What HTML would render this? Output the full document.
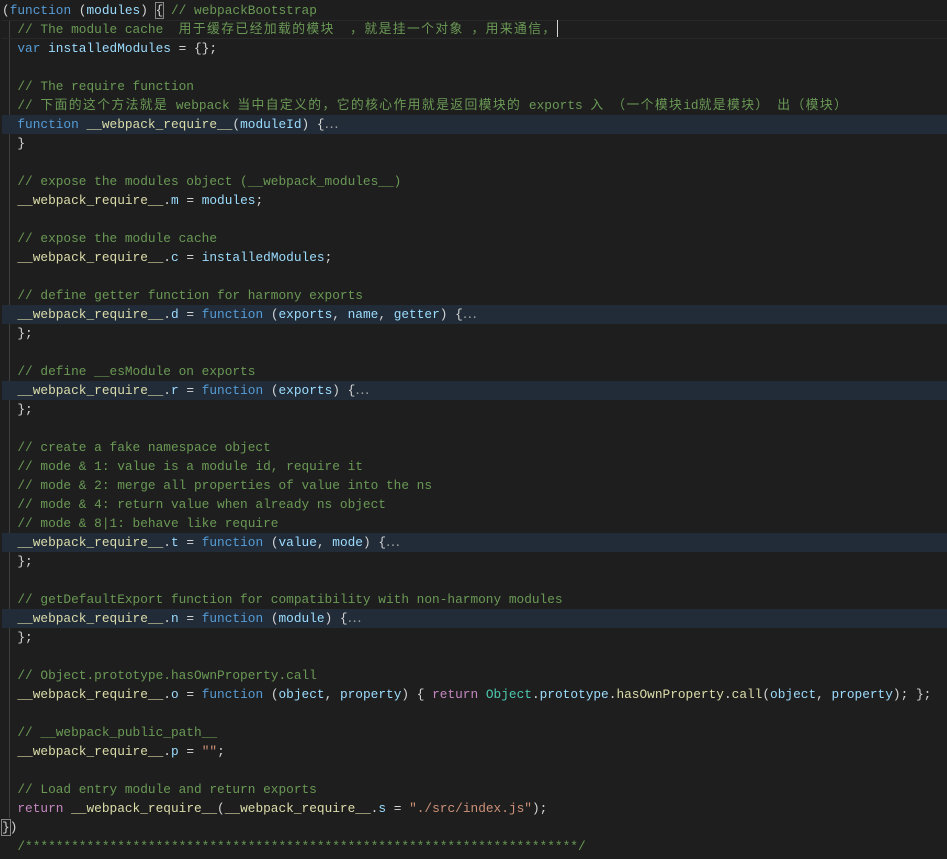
<!DOCTYPE html>
<html><head><meta charset="utf-8"><style>
html,body{margin:0;padding:0;background:#1e1e1e;width:947px;height:859px;overflow:hidden}
pre{margin:0;padding:1px 0 0 2px;font-family:"Liberation Mono","Noto Sans CJK SC",monospace;font-size:12.8px;line-height:19px;color:#d4d4d4;position:relative}
.l{height:19px;white-space:pre;position:relative}
.h{background:#212c38}
.cur{box-shadow:inset 0 1px 0 #282828,inset 0 -1px 0 #282828}
.c{color:#6a9955}.k{color:#569cd6}.v{color:#9cdcfe}.f{color:#dcdcaa}.s{color:#ce9178}.r{color:#c586c0}.t{color:#4ec9b0}
.z{letter-spacing:1.4px}
.dots{color:#a0a0a0}
.guide{position:absolute;left:9px;top:20px;width:1px;height:798px;background:#404040}
.box{outline:1px solid #888;}
.caret{display:inline-block;width:1px;height:17px;background:#d4d4d4;vertical-align:-4px}
</style></head><body><pre><div class="guide"></div><div class="l">(<span class="k">function</span> (<span class="v">modules</span>) <span class="box">{</span> <span class="c">// webpackBootstrap</span></div><div class="l cur">  <span class="c">// The module cache  <span class="z">用于缓存已经加载的模块</span>  <span class="z">，就是挂一个对象</span> <span class="z">，用来通信，</span></span><span class="caret"></span></div><div class="l">  <span class="k">var</span> <span class="v">installedModules</span> = {};</div><div class="l"> </div><div class="l">  <span class="c">// The require function</span></div><div class="l">  <span class="c">// <span class="z">下面的这个方法就是</span> webpack <span class="z">当中自定义的，它的核心作用就是返回模块的</span> exports <span class="z">入</span> <span class="z">（一个模块</span>id<span class="z">就是模块）</span> <span class="z">出（模块）</span></span></div><div class="l h">  <span class="k">function</span> <span class="f">__webpack_require__</span>(<span class="v">moduleId</span>) {<span class="dots">⋯</span></div><div class="l">  }</div><div class="l"> </div><div class="l">  <span class="c">// expose the modules object (__webpack_modules__)</span></div><div class="l">  <span class="f">__webpack_require__</span>.<span class="v">m</span> = <span class="v">modules</span>;</div><div class="l"> </div><div class="l">  <span class="c">// expose the module cache</span></div><div class="l">  <span class="f">__webpack_require__</span>.<span class="v">c</span> = <span class="v">installedModules</span>;</div><div class="l"> </div><div class="l">  <span class="c">// define getter function for harmony exports</span></div><div class="l h">  <span class="f">__webpack_require__</span>.<span class="v">d</span> = <span class="k">function</span> (<span class="v">exports</span>, <span class="v">name</span>, <span class="v">getter</span>) {<span class="dots">⋯</span></div><div class="l">  };</div><div class="l"> </div><div class="l">  <span class="c">// define __esModule on exports</span></div><div class="l h">  <span class="f">__webpack_require__</span>.<span class="v">r</span> = <span class="k">function</span> (<span class="v">exports</span>) {<span class="dots">⋯</span></div><div class="l">  };</div><div class="l"> </div><div class="l">  <span class="c">// create a fake namespace object</span></div><div class="l">  <span class="c">// mode &amp; 1: value is a module id, require it</span></div><div class="l">  <span class="c">// mode &amp; 2: merge all properties of value into the ns</span></div><div class="l">  <span class="c">// mode &amp; 4: return value when already ns object</span></div><div class="l">  <span class="c">// mode &amp; 8|1: behave like require</span></div><div class="l h">  <span class="f">__webpack_require__</span>.<span class="v">t</span> = <span class="k">function</span> (<span class="v">value</span>, <span class="v">mode</span>) {<span class="dots">⋯</span></div><div class="l">  };</div><div class="l"> </div><div class="l">  <span class="c">// getDefaultExport function for compatibility with non-harmony modules</span></div><div class="l h">  <span class="f">__webpack_require__</span>.<span class="v">n</span> = <span class="k">function</span> (<span class="v">module</span>) {<span class="dots">⋯</span></div><div class="l">  };</div><div class="l"> </div><div class="l">  <span class="c">// Object.prototype.hasOwnProperty.call</span></div><div class="l">  <span class="f">__webpack_require__</span>.<span class="v">o</span> = <span class="k">function</span> (<span class="v">object</span>, <span class="v">property</span>) { <span class="r">return</span> <span class="t">Object</span>.<span class="v">prototype</span>.<span class="f">hasOwnProperty</span>.<span class="f">call</span>(<span class="v">object</span>, <span class="v">property</span>); };</div><div class="l"> </div><div class="l">  <span class="c">// __webpack_public_path__</span></div><div class="l">  <span class="f">__webpack_require__</span>.<span class="v">p</span> = <span class="s">""</span>;</div><div class="l"> </div><div class="l">  <span class="c">// Load entry module and return exports</span></div><div class="l">  <span class="r">return</span> <span class="f">__webpack_require__</span>(<span class="f">__webpack_require__</span>.<span class="v">s</span> = <span class="s">"./src/index.js"</span>);</div><div class="l"><span class="box">}</span>)</div><div class="l">  <span class="c">/************************************************************************/</span></div></pre></body></html>
